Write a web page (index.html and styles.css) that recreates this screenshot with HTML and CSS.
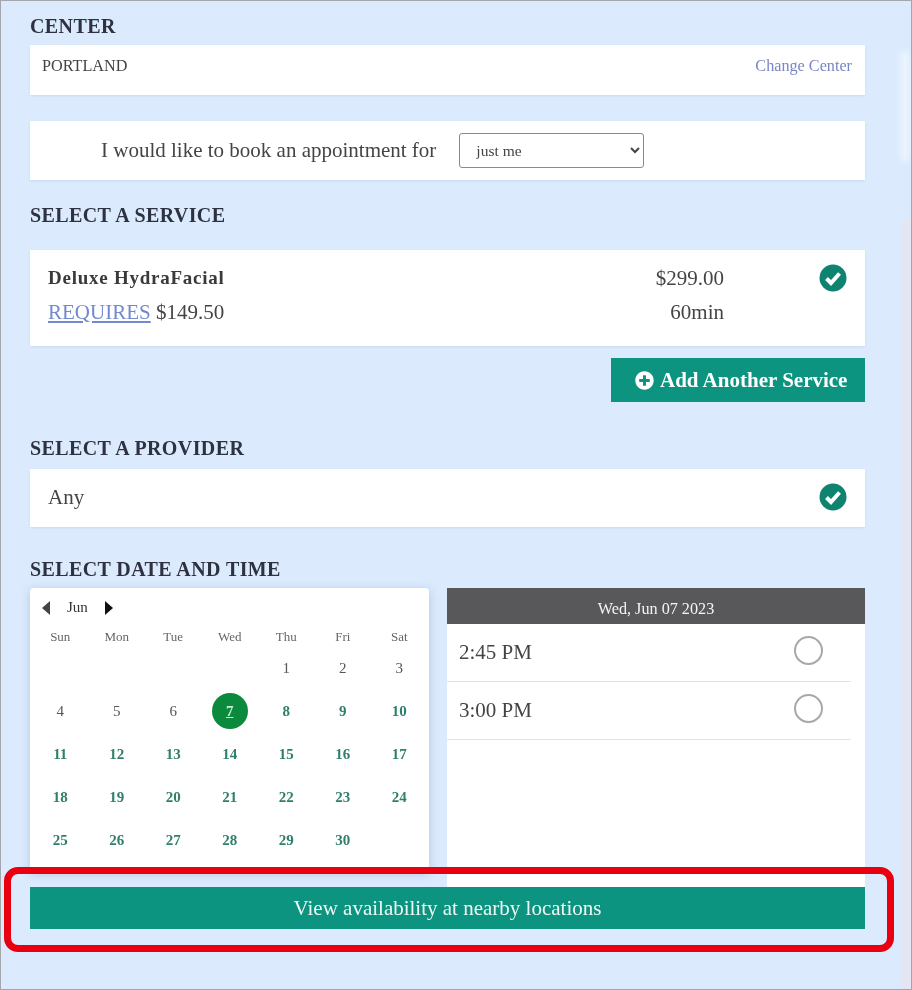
FILE: index.html
```html
<!DOCTYPE html>
<html lang="en">

<head>
    <meta charset="UTF-8">
    <meta name="viewport" content="width=device-width, initial-scale=1.0">
    <title>Book an appointment</title>
    <link rel="stylesheet" href="styles.css">
</head>

<body>
    <svg class="icon-defs" width="0" height="0">
        <symbol id="check-circle" viewBox="0 0 28 28">
            <circle cx="14" cy="14" r="13.5" fill="#0e8370"/>
            <polyline points="7.5,14.5 12,19 20.5,9.5" fill="none" stroke="#fff" stroke-width="4"/>
        </symbol>
        <symbol id="plus-circle" viewBox="0 0 512 512">
            <path d="M256 8C119 8 8 119 8 256s111 248 248 248 248-111 248-248S393 8 256 8zm144 276c0 6.6-5.4 12-12 12h-92v92c0 6.6-5.4 12-12 12h-56c-6.6 0-12-5.4-12-12v-92h-92c-6.6 0-12-5.4-12-12v-56c0-6.6 5.4-12 12-12h92v-92c0-6.6 5.4-12 12-12h56c6.6 0 12 5.4 12 12v92h92c6.6 0 12 5.4 12 12v56z"/>
        </symbol>
    </svg>

    <div class="page">
        <h2 class="section-title first">CENTER</h2>
        <div class="card center-card">
            <span class="center-name">PORTLAND</span>
            <a href="#" class="change-link">Change Center</a>
        </div>

        <div class="card book-card">
            <label for="book-for">I would like to book an appointment for</label>
            <select id="book-for" class="book-select">
                <option>just me</option>
            </select>
        </div>

        <h2 class="section-title service-title">SELECT A SERVICE</h2>
        <div class="card service-card">
            <strong class="service-name">Deluxe HydraFacial</strong>
            <span class="service-value">$299.00</span>
            <svg class="check"><use href="#check-circle"/></svg>
            <span><a href="#" class="requires">REQUIRES</a> $149.50</span>
            <span class="service-value">60min</span>
        </div>
        <div class="add-row">
            <button class="add-btn" type="button">
                <svg class="plus"><use href="#plus-circle"/></svg>
                Add Another Service
            </button>
        </div>

        <h2 class="section-title provider-title">SELECT A PROVIDER</h2>
        <div class="card provider-card">
            <span>Any</span>
            <svg class="check"><use href="#check-circle"/></svg>
        </div>

        <h2 class="section-title date-title">SELECT DATE AND TIME</h2>
        <div class="date-row">
            <div class="calendar">
                <div class="cal-head">
                    <svg class="arrow" viewBox="0 0 10 14"><polygon points="9,0 9,14 1,7" fill="#444"/></svg>
                    <span class="cal-month">Jun</span>
                    <svg class="arrow" viewBox="0 0 10 14"><polygon points="1,0 1,14 9,7" fill="#111"/></svg>
                </div>
                <div class="cal-grid">
                    <span class="dow">Sun</span><span class="dow">Mon</span><span class="dow">Tue</span><span class="dow">Wed</span><span class="dow">Thu</span><span class="dow">Fri</span><span class="dow">Sat</span>
                    <span></span><span></span><span></span><span></span>
                    <span class="day">1</span><span class="day">2</span><span class="day">3</span>
                    <span class="day">4</span><span class="day">5</span><span class="day">6</span>
                    <span class="day selected"><u>7</u></span>
                    <span class="day open">8</span><span class="day open">9</span><span class="day open">10</span>
                    <span class="day open">11</span><span class="day open">12</span><span class="day open">13</span><span class="day open">14</span><span class="day open">15</span><span class="day open">16</span><span class="day open">17</span>
                    <span class="day open">18</span><span class="day open">19</span><span class="day open">20</span><span class="day open">21</span><span class="day open">22</span><span class="day open">23</span><span class="day open">24</span>
                    <span class="day open">25</span><span class="day open">26</span><span class="day open">27</span><span class="day open">28</span><span class="day open">29</span><span class="day open">30</span>
                </div>
            </div>
            <div class="slots">
                <div class="slots-head">Wed, Jun 07 2023</div>
                <div class="slot"><span>2:45 PM</span><span class="radio"></span></div>
                <div class="slot"><span>3:00 PM</span><span class="radio"></span></div>
            </div>
        </div>
        <button class="nearby-btn" type="button">View availability at nearby locations</button>

        <div class="side-glow"></div>
        <div class="side-band"></div>
        <div class="highlight"></div>
    </div>
</body>

</html>
```

FILE: styles.css
```css
* {
    box-sizing: border-box;
}

body {
    margin: 0;
    font-family: "Liberation Serif", serif;
    color: #444;
}

.icon-defs {
    position: absolute;
}

.page {
    position: relative;
    width: 912px;
    height: 990px;
    padding: 0 46px 0 29px;
    overflow: hidden;
    background-color: #dbebfd;
    border: 1px solid #a3a6aa;
    filter: blur(0.35px);
}

.section-title {
    margin: 0;
    font-size: 20px;
    letter-spacing: 0.4px;
    line-height: 22px;
    font-weight: bold;
    color: #2d3140;
}

.section-title.first {
    margin-top: 14px;
    margin-bottom: 8px;
}

.service-title {
    margin-top: 24px;
    margin-bottom: 24px;
}

.provider-title {
    margin-top: 35px;
    margin-bottom: 10px;
}

.date-title {
    margin-top: 31px;
    margin-bottom: 8px;
}

.card {
    background-color: #fff;
    box-shadow: 0 1px 2px rgba(90, 110, 150, 0.12);
}

.center-card {
    display: flex;
    justify-content: space-between;
    height: 50px;
    margin-bottom: 26px;
    padding: 12px 13px 0 12px;
    font-size: 16.2px;
    line-height: 19px;
}

.change-link {
    color: #7a86c4;
    text-decoration: none;
}

.book-card {
    display: flex;
    align-items: center;
    height: 59px;
    padding-left: 71px;
    font-size: 21px;
}

.book-select {
    width: 185px;
    height: 35px;
    margin-left: 23px;
    padding-left: 12px;
    font-family: "Liberation Serif", serif;
    font-size: 15.5px;
    color: #444;
    background-color: #fff;
    border: 1px solid #8a8a8a;
    border-radius: 3px;
}

.service-card {
    display: grid;
    grid-template-columns: 1fr auto 28px;
    grid-auto-rows: 34px;
    column-gap: 95px;
    align-items: center;
    height: 96px;
    padding: 11px 18px 0;
    font-size: 21px;
}

.service-name {
    font-size: 19px;
    letter-spacing: 0.75px;
    color: #3a3a3a;
}

.service-value {
    text-align: right;
}

.requires {
    color: #7289cf;
}

.check {
    width: 28px;
    height: 28px;
}

.add-row {
    display: flex;
    justify-content: flex-end;
    margin-top: 12px;
}

.add-btn {
    display: flex;
    align-items: center;
    gap: 6px;
    width: 254px;
    height: 44px;
    padding: 0 0 0 24px;
    font-family: "Liberation Serif", serif;
    font-size: 21px;
    font-weight: bold;
    color: #fff;
    background-color: #0d9480;
    border: none;
}

.plus {
    width: 19px;
    height: 19px;
    fill: #fff;
}

.provider-card {
    display: flex;
    justify-content: space-between;
    align-items: center;
    height: 58px;
    padding: 0 18px 2px;
    font-size: 21px;
}

.date-row {
    display: grid;
    grid-template-columns: 399px 418px;
    column-gap: 18px;
    align-items: start;
    height: 299px;
}

.calendar {
    height: 284px;
    padding: 0 2px;
    background-color: #fff;
    border-radius: 4px;
    box-shadow: 0 2px 10px rgba(90, 110, 160, 0.3);
}

.cal-head {
    display: flex;
    align-items: center;
    gap: 16px;
    height: 39px;
    padding-left: 9px;
}

.arrow {
    width: 10px;
    height: 14px;
}

.cal-month {
    font-size: 15px;
    color: #333;
}

.cal-grid {
    display: grid;
    grid-template-columns: repeat(7, 56.5px);
    grid-template-rows: 20px repeat(5, 43px);
}

.cal-grid > span {
    display: flex;
    align-items: center;
    justify-content: center;
}

.dow {
    font-size: 13px;
    color: #666;
}

.day {
    font-size: 15px;
    font-weight: 400;
    color: #555;
}

.day.open {
    font-weight: bold;
    color: #2f7f6c;
}

.day.selected {
    width: 36px;
    height: 36px;
    margin: 3px auto 0;
    font-weight: bold;
    color: #c9ecd6;
    background-color: #0b8a3e;
    border-radius: 50%;
}

.slots {
    height: 299px;
    background-color: #fff;
}

.slots-head {
    height: 36px;
    font-size: 16.2px;
    line-height: 43px;
    text-align: center;
    color: #f4f4f4;
    background-color: #58585a;
}

.slot {
    display: flex;
    justify-content: space-between;
    align-items: center;
    height: 58px;
    margin-right: 14px;
    padding: 0 28px 0 12px;
    font-size: 21px;
    border-bottom: 1px solid #e4e2e6;
}

.radio {
    width: 29px;
    height: 29px;
    margin-bottom: 4px;
    border: 2px solid #a8a8a8;
    border-radius: 50%;
}

.nearby-btn {
    display: block;
    width: 835px;
    height: 42px;
    padding: 0;
    font-family: "Liberation Serif", serif;
    font-size: 21px;
    color: #eef8f5;
    background-color: #0d9480;
    border: none;
}

.side-glow {
    position: absolute;
    top: 50px;
    right: 2px;
    width: 8px;
    height: 110px;
    background-color: #edf5ff;
    border-radius: 5px;
    filter: blur(3px);
}

.side-band {
    position: absolute;
    top: 218px;
    right: 0;
    width: 10px;
    height: 770px;
    background-color: #e5e6f3;
}

.highlight {
    position: absolute;
    top: 866px;
    left: 3px;
    width: 890px;
    height: 85px;
    border: 7px solid #e80010;
    border-radius: 14px;
}
```
